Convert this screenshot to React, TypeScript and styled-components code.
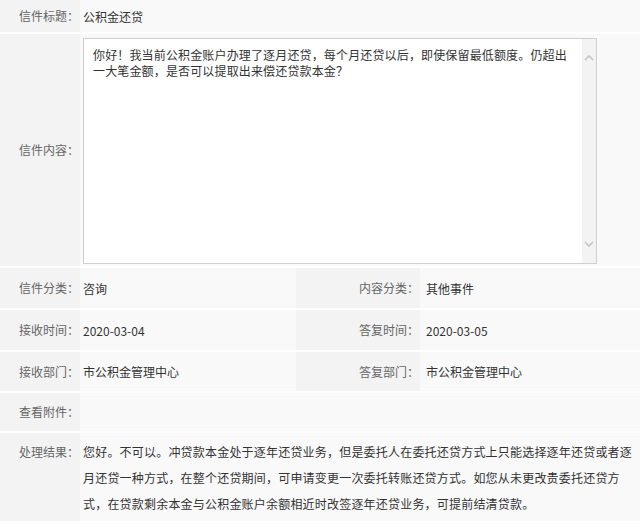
import styled, { createGlobalStyle } from "styled-components";

const GlobalStyle = createGlobalStyle`
  body {
    margin: 0;
    background: #ffffff;
    font-family: "Noto Sans CJK SC", "Liberation Sans", sans-serif;
  }
`;

const Table = styled.div`
  display: flex;
  flex-direction: column;
  gap: 2px;
  width: 640px;
  background: #ffffff;
`;

const Row = styled.div<{ h: number }>`
  display: flex;
  height: ${({ h }) => h}px;
`;

const LabelCell = styled.div<{ w: number; top?: boolean }>`
  width: ${({ w }) => w}px;
  flex-shrink: 0;
  box-sizing: border-box;
  display: flex;
  align-items: ${({ top }) => (top ? "flex-start" : "center")};
  justify-content: flex-end;
  padding-right: 1px;
  padding-top: ${({ top }) => (top ? "6px" : "0")};
  background: #f3f3f3;
  color: #666666;
  font-size: 12px;
  line-height: 26px;
  white-space: nowrap;
`;

const ValueCell = styled.div<{ w?: number; pad?: number }>`
  ${({ w }) => (w ? `width: ${w}px; flex-shrink: 0;` : "flex: 1;")}
  box-sizing: border-box;
  display: flex;
  align-items: center;
  padding-left: ${({ pad }) => pad ?? 3}px;
  background: #f9f9f9;
  color: #333333;
  font-size: 12px;
  white-space: nowrap;
`;

const TextArea = styled.div`
  width: 514px;
  height: 226px;
  box-sizing: border-box;
  border: 1px solid #cfcfcf;
  background: #ffffff;
  display: flex;
  justify-content: space-between;
  margin-top: 2px;
`;

const AreaText = styled.div`
  flex: 1;
  overflow: hidden;
  padding: 8px 0 0 9px;
  font-family: "Noto Sans CJK SC", serif;
  font-size: 12px;
  letter-spacing: 0.15px;
  line-height: 16px;
  color: #333333;
  white-space: nowrap;
`;

const ScrollBar = styled.div`
  width: 14px;
  flex-shrink: 0;
  background: #f3f3f3;
  display: flex;
  flex-direction: column;
  justify-content: space-between;
  align-items: center;
  padding: 16px 0 16px;
`;

const ResultCell = styled.div`
  flex: 1;
  box-sizing: border-box;
  padding: 6px 5px 0 3px;
  background: #f9f9f9;
  color: #333333;
  font-size: 12px;
  line-height: 26px;
  letter-spacing: 0.2px;
`;

const Chevron = ({ up }: { up?: boolean }) => (
  <svg width="10" height="6" viewBox="0 0 10 6">
    <path
      d={up ? "M1 5 L5 1 L9 5" : "M1 1 L5 5 L9 1"}
      fill="none"
      stroke="#c4c4c4"
      strokeWidth="1.6"
    />
  </svg>
);

const MetaRow = ({ l1, v1, l2, v2, h }: { l1: string; v1: string; l2: string; v2: string; h: number }) => (
  <Row h={h}>
    <LabelCell w={80}>{l1}</LabelCell>
    <ValueCell w={216}>{v1}</ValueCell>
    <LabelCell w={124}>{l2}</LabelCell>
    <ValueCell pad={6}>{v2}</ValueCell>
  </Row>
);

export default function App() {
  return (
    <>
      <GlobalStyle />
      <Table>
        <Row h={32}>
          <LabelCell w={80}>信件标题：</LabelCell>
          <ValueCell>公积金还贷</ValueCell>
        </Row>
        <Row h={232}>
          <LabelCell w={80}>信件内容：</LabelCell>
          <ValueCell>
            <TextArea>
              <AreaText>
                你好！我当前公积金账户办理了逐月还贷，每个月还贷以后，即使保留最低额度。仍超出
                <br />
                一大笔金额，是否可以提取出来偿还贷款本金？
              </AreaText>
              <ScrollBar>
                <Chevron up />
                <Chevron />
              </ScrollBar>
            </TextArea>
          </ValueCell>
        </Row>
        <MetaRow h={40} l1="信件分类：" v1="咨询" l2="内容分类：" v2="其他事件" />
        <MetaRow h={40} l1="接收时间：" v1="2020-03-04" l2="答复时间：" v2="2020-03-05" />
        <MetaRow h={39} l1="接收部门：" v1="市公积金管理中心" l2="答复部门：" v2="市公积金管理中心" />
        <Row h={38}>
          <LabelCell w={80}>查看附件：</LabelCell>
          <ValueCell />
        </Row>
        <Row h={88}>
          <LabelCell w={80} top>
            处理结果：
          </LabelCell>
          <ResultCell>
            您好。不可以。冲贷款本金处于逐年还贷业务，但是委托人在委托还贷方式上只能选择逐年还贷或者逐月还贷一种方式，在整个还贷期间，可申请变更一次委托转账还贷方式。如您从未更改贵委托还贷方式，在贷款剩余本金与公积金账户余额相近时改签逐年还贷业务，可提前结清贷款。
          </ResultCell>
        </Row>
      </Table>
    </>
  );
}
